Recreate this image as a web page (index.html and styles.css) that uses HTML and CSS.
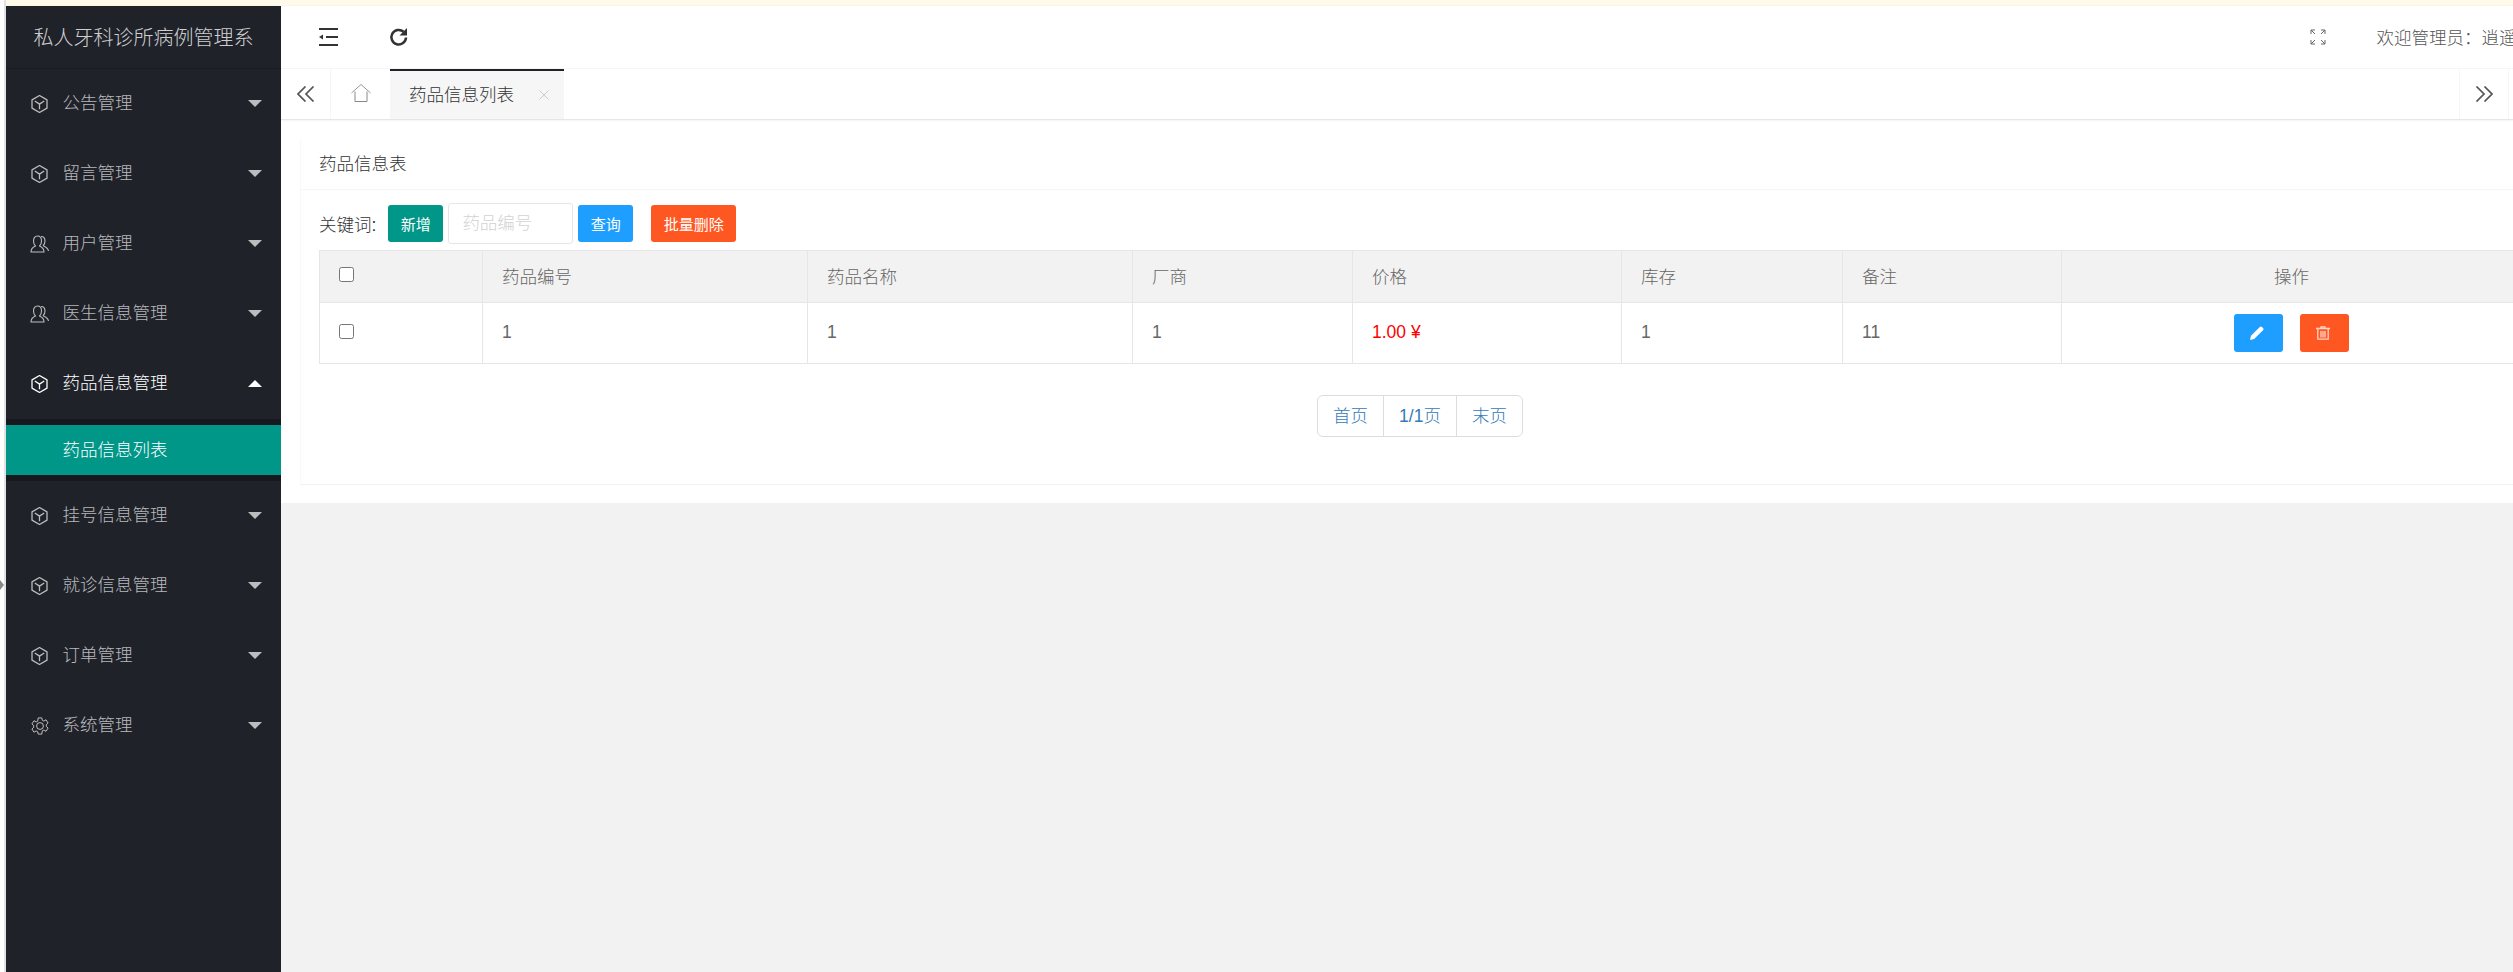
FILE: index.html
```html
<!DOCTYPE html>
<html lang="zh-CN">
<head>
<meta charset="utf-8">
<title>药品信息列表</title>
<link rel="stylesheet" href="styles.css">
</head>
<body>
<svg class="defs" aria-hidden="true">
  <symbol id="i-cube" viewBox="1.500 0.700 15 16.800"><path d="M9 1.200l7 4v7.800l-7 4-7-4V5.200zM4.600 6.300L9 9.200l4.400-2.900M9 9.200V14" fill="none" stroke="currentColor" stroke-width="1.200" stroke-linejoin="round"/></symbol>
  <symbol id="i-user" viewBox="0 0 20 18"><path d="M1 17c0-3.500 2-5 4.500-6C4 9.500 3.500 8 3.500 6 3.500 3 5 1 7.500 1s4 2 4 5c0 2-.5 3.500-2 5 2.500 1 4.500 2.500 4.500 6zM11 1.500c2.500 0 4 1.800 4 4.500 0 2-.6 3.400-1.800 4.700 2.300 1 4.800 2.300 5.300 5.300" fill="none" stroke="currentColor" stroke-width="1.100" stroke-linejoin="round"/></symbol>
  <symbol id="i-gear" viewBox="0 0 20 20"><path d="M8 1h4l.6 2.700 1.700.8 2.400-1.400 2.300 3.600-2 1.800v2l2 1.800-2.300 3.600-2.400-1.400-1.700.8L12 19H8l-.6-2.700-1.700-.8-2.400 1.400L1 13.300l2-1.800v-2L1 7.700l2.300-3.600 2.400 1.400 1.700-.8z" fill="none" stroke="currentColor" stroke-width="1.100" stroke-linejoin="round"/><circle cx="10" cy="10" r="3.800" fill="none" stroke="currentColor" stroke-width="1.100"/></symbol>
</svg>
<div class="topline"></div>
<div class="shell">
  <div class="edge"><span class="edge-arrow"></span></div>
  <aside class="side">
    <div class="logo">私人牙科诊所病例管理系</div>
    <nav class="menu">
      <a class="item"><svg class="mi"><use href="#i-cube"/></svg><span class="label">公告管理</span><i class="caret"></i></a>
      <a class="item"><svg class="mi"><use href="#i-cube"/></svg><span class="label">留言管理</span><i class="caret"></i></a>
      <a class="item"><svg class="mi mi-wide"><use href="#i-user"/></svg><span class="label">用户管理</span><i class="caret"></i></a>
      <a class="item"><svg class="mi mi-wide"><use href="#i-user"/></svg><span class="label">医生信息管理</span><i class="caret"></i></a>
      <a class="item open"><svg class="mi"><use href="#i-cube"/></svg><span class="label">药品信息管理</span><i class="caret up"></i></a>
      <div class="sub"><a class="sub-item">药品信息列表</a></div>
      <a class="item"><svg class="mi"><use href="#i-cube"/></svg><span class="label">挂号信息管理</span><i class="caret"></i></a>
      <a class="item"><svg class="mi"><use href="#i-cube"/></svg><span class="label">就诊信息管理</span><i class="caret"></i></a>
      <a class="item"><svg class="mi"><use href="#i-cube"/></svg><span class="label">订单管理</span><i class="caret"></i></a>
      <a class="item"><svg class="mi mi-wide"><use href="#i-gear"/></svg><span class="label">系统管理</span><i class="caret"></i></a>
    </nav>
  </aside>
  <main class="main">
    <header class="head">
      <svg class="hicon" viewBox="0 0 20 18" width="20" height="18"><path d="M0 1h19M7 9h12M0 17h19" stroke="#333" stroke-width="2" fill="none"/><path d="M0 9l4-2.600v5.200z" fill="#333"/></svg>
      <svg class="hicon refresh" viewBox="0 0 20 20" width="20" height="20"><path d="M17 10.500a7.300 7.300 0 1 1-2.400-5.700" stroke="#333" stroke-width="2.500" fill="none"/><path d="M18 1v7.500h-7.500z" fill="#333"/></svg>
      <span class="spacer"></span>
      <svg class="full" viewBox="0 0 16 16" width="16" height="16"><path d="M1 5V1h4M1 1l4 4M11 1h4v4M15 1l-4 4M1 11v4h4M1 15l4-4M15 11v4h-4M15 15l-4-4" stroke="#666" stroke-width="1" fill="none"/></svg>
      <span class="welcome">欢迎管理员：逍遥</span>
    </header>
    <div class="tabs">
      <button class="tab-btn"><svg viewBox="0 0 18 16" width="18" height="16"><path d="M8.500 0.500L1 8l7.500 7.500M16.500 0.500L9 8l7.500 7.500" fill="none" stroke="#555" stroke-width="1.700"/></svg></button>
      <div class="tab-home"><svg viewBox="0 0 20 18" width="20" height="18"><path d="M0.500 9L10 0.500 19.500 9" fill="none" stroke="#999" stroke-width="1"/><path d="M4 7.500V17.500h12V7.500" fill="none" stroke="#888" stroke-width="1"/></svg></div>
      <div class="tab-active"><span>药品信息列表</span><svg class="close" viewBox="0 0 10 10" width="10" height="10"><path d="M0.500 0.500l9 9M9.500 0.500l-9 9" stroke="#ccc" stroke-width="1"/></svg></div>
      <span class="spacer"></span>
      <button class="tab-btn tab-next"><svg viewBox="0 0 18 16" width="18" height="16"><path d="M1.500 0.500L9 8l-7.500 7.500M9.500 0.500L17 8l-7.500 7.500" fill="none" stroke="#555" stroke-width="1.700"/></svg></button>
    </div>
    <section class="content">
      <div class="card">
        <div class="card-title">药品信息表</div>
        <div class="card-body">
          <div class="toolbar">
            <label class="kw">关键词:</label>
            <button class="btn teal">新增</button>
            <input class="search" type="text" placeholder="药品编号">
            <button class="btn blue">查询</button>
            <button class="btn orange gap">批量删除</button>
          </div>
          <table class="grid">
            <colgroup><col class="c0"><col class="c1"><col class="c2"><col class="c3"><col class="c4"><col class="c5"><col class="c6"><col class="c7"></colgroup>
            <thead>
              <tr><th><input class="check" type="checkbox"></th><th>药品编号</th><th>药品名称</th><th>厂商</th><th>价格</th><th>库存</th><th>备注</th><th class="center">操作</th></tr>
            </thead>
            <tbody>
              <tr>
                <td><input class="check" type="checkbox"></td><td>1</td><td>1</td><td>1</td><td class="price">1.00 ¥</td><td>1</td><td>11</td>
                <td class="center">
                  <div class="ops">
                    <button class="op blue"><svg viewBox="0 0 14 14" width="14" height="14"><path d="M0 14l1-4.200L9.800 1a1.500 1.500 0 0 1 2.100 0l1.100 1.100a1.500 1.500 0 0 1 0 2.100L4.200 13z" fill="#fff"/></svg></button>
                    <button class="op orange"><svg viewBox="0 0 14 14" width="14" height="14"><path d="M0 2.500h14M5 2.300V.8h4v1.500M1.800 2.500v10.700h10.400V2.500M5 5v6.500M7 5v6.500M9 5v6.500" fill="none" stroke="#ffd5c8" stroke-width="1.300"/></svg></button>
                  </div>
                </td>
              </tr>
            </tbody>
          </table>
          <div class="pager"><div class="pages"><a class="pg p1">首页</a><a class="pg p2">1/1页</a><a class="pg p3">末页</a></div></div>
        </div>
      </div>
    </section>
    <div class="fill"></div>
  </main>
</div>
</body>
</html>
```
FILE: styles.css
```css
* { box-sizing: border-box; }
html, body { margin: 0; padding: 0; height: 100%; }
body {
  height: 972px;
  overflow: hidden;
  background: #fff;
  display: flex;
  flex-direction: column;
  font-family: "Liberation Sans", "Noto Sans CJK SC", sans-serif;
  font-size: 17.5px;
  font-weight: 300;
  color: #666;
}
.defs { display: none; }
.topline { height: 6px; flex: none; margin-left: 6px; background: #fffaea; border-bottom: 1px solid #fdf6e3; }
.shell { flex: 1; display: flex; min-height: 0; }
.edge { width: 6px; flex: none; background: #fff; border-right: 2px solid #e2e2e2; position: relative; margin-top: -6px; }
.edge-arrow { position: absolute; left: 0; top: 580px; border-left: 4px solid #888; border-top: 5px solid transparent; border-bottom: 5px solid transparent; }

.side { width: 275px; flex: none; background: #20222a; color: rgba(255,255,255,.7); }
.logo { height: 62px; padding-bottom: 1px; display: flex; align-items: center; justify-content: center; font-size: 20px; color: rgba(255,255,255,.8); box-shadow: 0 1px 0 rgba(0,0,0,.15); }
.menu { display: flex; flex-direction: column; }
.item { height: 70px; display: flex; align-items: center; padding-left: 25px; padding-right: 19px; }
.item.open { color: #fff; }
.mi { width: 17px; height: 18px; flex: none; margin-right: 14.5px; position: relative; top: 1px; }
.mi-wide { width: 20px; margin-left: -1px; margin-right: 12.5px; }
.label { flex: 1; padding-bottom: 3px; }
.caret { width: 0; height: 0; border-left: 7px solid transparent; border-right: 7px solid transparent; border-top: 7px solid rgba(255,255,255,.7); }
.caret.up { border-top: 0; border-bottom: 7px solid #fff; }
.sub { background: #17181d; padding: 6px 0; margin: 1px 0 -1px; }
.sub-item { height: 50px; padding: 0 0 4px 56.5px; display: flex; align-items: center; background: #009688; color: #fff; }

.main { flex: 1; min-width: 0; display: flex; flex-direction: column; overflow: hidden; background: #fff; }
.head { height: 63px; flex: none; display: flex; align-items: center; padding-left: 38px; border-bottom: 1px solid #f6f6f6; }
.hicon { flex: none; }
.refresh { margin-left: 50px; }
.spacer { flex: 1; }
.full { flex: none; margin-right: 51px; }
.welcome { flex: none; width: 136.500px; padding-bottom: 2px; white-space: nowrap; overflow: hidden; color: #555; }

.tabs { height: 51px; flex: none; display: flex; align-items: stretch; border-bottom: 1px solid #e6e6e6; box-shadow: 0 1px 2px rgba(0,0,0,.05); position: relative; }
.tab-btn { width: 50px; flex: none; padding: 0; background: #fff; border: 0; border-right: 1px solid #f6f6f6; display: flex; align-items: center; justify-content: center; }
.tab-home { width: 59px; flex: none; padding-bottom: 2px; display: flex; align-items: center; justify-content: center; }
.tab-active { width: 174px; flex: none; display: flex; align-items: center; padding-left: 19px; background: #f6f6f6; border-top: 2px solid #20222a; color: #333; }
.tab-active span { flex: 1; padding-bottom: 4px; }
.close { flex: none; margin-right: 15px; }
.tab-next { border-right: 1px solid #f6f6f6; border-left: 1px solid #f6f6f6; margin-right: 4px; width: 50px; }

.content { flex: none; padding: 20px 0 18px 19px; background: #fff; }
.card { width: 2300px; height: 345px; border-left: 1px solid #f8f8f8; border-bottom: 1px solid #f2f2f2; }
.card-title { height: 50px; padding: 0 0 4px 18px; display: flex; align-items: center; color: #333; border-bottom: 1px solid #f6f6f6; }
.card-body { padding: 13px 0 0 18px; }
.toolbar { display: flex; align-items: center; height: 41px; margin-bottom: 6px; color: #333; }
.kw { margin-right: 12px; }
.btn { height: 37px; width: 55px; padding: 0 0 1px; border: 0; border-radius: 3px; color: #fff; font: inherit; font-size: 15px; font-weight: 400; }
.teal { background: #009688; }
.blue { background: #1e9fff; }
.orange { background: #ff5722; }
.btn.gap { margin-left: 18px; width: 85px; }
.search { width: 125px; height: 41px; margin: 0 5px; padding: 0 13px; border: 1px solid #e6e6e6; border-radius: 3px; font: inherit; background: #fff; outline: 0; }
.search::placeholder { color: #d2d2d2; opacity: 1; }

.grid { width: 2202px; table-layout: fixed; border-collapse: collapse; }
.c0 { width: 163px; } .c1 { width: 325px; } .c2 { width: 325px; } .c3 { width: 220px; }
.c4 { width: 269px; } .c5 { width: 221px; } .c6 { width: 219px; } .c7 { width: 460px; }
.grid th, .grid td { border: 1px solid #e6e6e6; padding: 0 19px 2px; text-align: left; font-weight: 300; color: #666; }
.grid th { height: 52px; background: #f2f2f2; padding-bottom: 3px; }
.grid td { height: 61px; }
.grid td.center { padding-bottom: 0; }
.grid .center { text-align: center; }
.grid .price { color: #f00; font-weight: 400; }
.check { width: 15px; height: 15px; margin: 0; vertical-align: middle; position: relative; top: -1px; }
.ops { display: flex; justify-content: center; gap: 17px; }
.op { width: 49px; height: 38px; padding: 0 3px 0 0; border: 0; border-radius: 3px; display: flex; align-items: center; justify-content: center; }

.pager { display: flex; justify-content: center; width: 2202px; margin-top: 31px; }
.pages { display: flex; height: 42px; border: 1px solid #ddd; border-radius: 6px; color: #337ab7; }
.pg { padding-bottom: 3px; display: flex; align-items: center; justify-content: center; }
.p1 { width: 66px; border-right: 1px solid #ddd; }
.p2 { width: 73px; border-right: 1px solid #ddd; }
.p3 { width: 65px; }
.fill { flex: 1; background: #f2f2f2; }
```
